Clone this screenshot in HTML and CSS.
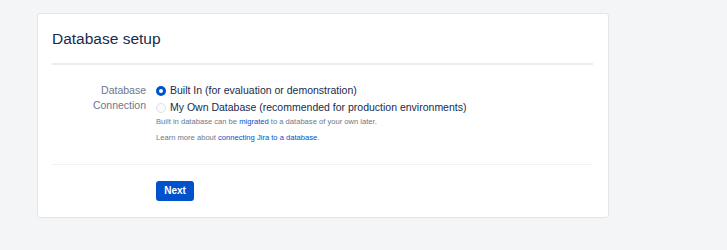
FILE: index.html
```html
<!DOCTYPE html>
<html lang="en">
  <head>
    <meta charset="UTF-8" />
    <title>Database setup</title>
    <link rel="stylesheet" href="styles.css">
  </head>
  <body>
    <div class="card">
      <h2 class="card-title">Database setup</h2>

      <div class="form-row">
        <div class="form-label">Database<br />Connection</div>
        <div class="form-field">
          <label class="radio">
            <span class="radio-dot checked"></span>
            Built In (for evaluation or demonstration)
          </label>
          <label class="radio">
            <span class="radio-dot"></span>
            My Own Database (recommended for production environments)
          </label>
          <p class="help first">Built in database can be <a href="#">migrated</a> to a database of your own later.</p>
          <p class="help">Learn more about <a href="#">connecting Jira to a database</a>.</p>
        </div>
      </div>

      <div class="actions">
        <button class="btn-primary">Next</button>
      </div>
    </div>
  </body>
</html>
```

FILE: styles.css
```css
body {
  margin: 0;
  background-color: #f4f5f7;
  font-family: "Liberation Sans", Arial, sans-serif;
  color: #172b4d;
}

.card {
  margin: 13px 0 0 37px;
  width: 572px;
  height: 205px;
  background: white;
  border: 1px solid #e4e5e9;
  border-radius: 3px;
  padding: 0 15px 0 14px;
  box-sizing: border-box;
}

.card-title {
  margin: 0;
  padding: 16px 0 16px;
  font-size: 15.5px;
  font-weight: normal;
  line-height: 17px;
  border-bottom: 2px solid #ebecf0;
}

.form-row {
  display: flex;
  gap: 10px;
  padding: 17px 0 18px;
  border-bottom: 1px solid #f1f2f4;
}

.form-label {
  width: 94px;
  margin-top: 1px;
  text-align: right;
  font-size: 10.5px;
  line-height: 15px;
  color: #6b778c;
}

.form-field {
  display: flex;
  flex-direction: column;
}

.radio {
  display: flex;
  align-items: center;
  gap: 4px;
  font-size: 10.5px;
  line-height: 17px;
  color: #172b4d;
}

.radio-dot {
  width: 8px;
  height: 8px;
  border-radius: 50%;
  border: 1px solid #dfe1e6;
  background: #fafbfc;
}
.radio-dot.checked {
  width: 4px;
  height: 4px;
  border: 3px solid #0052cc;
  background: white;
}

.help {
  margin: 0;
  font-size: 7.6px;
  line-height: 16px;
  color: #6b778c;
}
.help.first {
  margin-top: -2px;
}
.help a {
  color: #0052cc;
  text-decoration: none;
}

.actions {
  padding: 15px 0 0 104px;
}

.btn-primary {
  background: #0052cc;
  color: white;
  border: none;
  border-radius: 3px;
  font-family: inherit;
  font-size: 10px;
  font-weight: bold;
  height: 20px;
  width: 38px;
  padding: 0;
}
```
